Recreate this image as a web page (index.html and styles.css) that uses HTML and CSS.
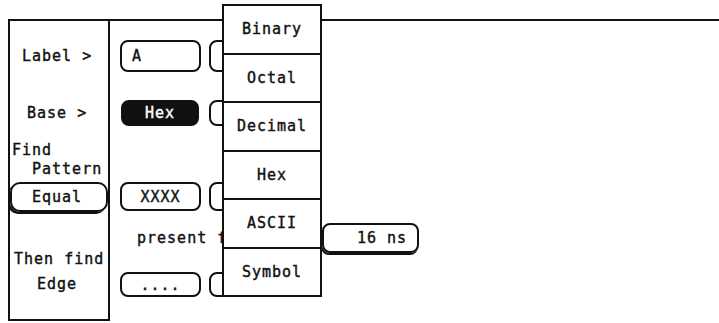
FILE: index.html
```html
<!DOCTYPE html>
<html>
<head>
<meta charset="utf-8">
<link rel="stylesheet" href="styles.css">
</head>
<body>
<div class="screen">
  <aside class="side">
    <div class="lbl lbl-label">Label &gt;</div>
    <div class="lbl lbl-base">Base &gt;</div>
    <div class="lbl lbl-find">Find</div>
    <div class="lbl lbl-pattern">Pattern</div>
    <div class="equal">Equal</div>
    <div class="lbl lbl-then">Then find</div>
    <div class="lbl lbl-edge">Edge</div>
  </aside>
  <main class="fields">
    <div class="row row1">
      <div class="field left">A</div>
      <div class="field"></div>
    </div>
    <div class="row row2">
      <div class="field inv">Hex</div>
      <div class="field"></div>
    </div>
    <div class="row row3">
      <div class="field">XXXX</div>
      <div class="field"></div>
    </div>
    <div class="row row4">
      <span class="present">present for</span>
      <div class="field ns">16 ns</div>
    </div>
    <div class="row row5">
      <div class="field">....</div>
      <div class="field"></div>
    </div>
  </main>
  <div class="menu">
    <div class="item">Binary</div>
    <div class="item">Octal</div>
    <div class="item">Decimal</div>
    <div class="item">Hex</div>
    <div class="item">ASCII</div>
    <div class="item">Symbol</div>
  </div>
</div>
</body>
</html>
```
FILE: styles.css
```css
* { box-sizing: border-box; }
html, body { margin: 0; background: #fff; }
body {
  width: 719px;
  height: 323px;
  overflow: hidden;
  font-family: "DejaVu Sans Mono", "Liberation Mono", monospace;
  font-size: 15px;
  line-height: 16px;
  letter-spacing: 1px;
  -webkit-text-stroke: 0.4px #111;
  color: #111;
}
.screen {
  position: relative;
  margin: 19px 0 0 8px;
  border-top: 2px solid #111;
  display: flex;
  height: 302px;
}
.side {
  width: 102px;
  height: 300px;
  border-left: 2px solid #111;
  border-right: 2px solid #111;
  border-bottom: 2px solid #111;
  display: flex;
  flex-direction: column;
}
.lbl {
  height: 16px;
  display: flex;
  align-items: center;
  white-space: pre;
}
.lbl-label { margin-top: 19px; height: 32px; padding-left: 12px; }
.lbl-base { margin-top: 28px; height: 26px; padding-left: 17px; }
.lbl-find { margin-top: 16px; padding-left: 2px; }
.lbl-pattern { margin-top: 3px; padding-left: 22px; }
.equal {
  margin-top: 5px;
  height: 30px;
  border: 2px solid #111;
  border-radius: 10px;
  box-shadow: -2px 2px 0 #111;
  display: flex;
  align-items: center;
  padding-left: 20px;
}
.lbl-then { margin-top: 39px; padding-left: 4px; }
.lbl-edge { margin-top: 9px; padding-left: 27px; }

.fields {
  display: flex;
  flex-direction: column;
  padding-left: 10px;
}
.row {
  display: flex;
  gap: 8px;
  align-items: center;
}
.row1 { margin-top: 19px; height: 32px; }
.row2 { margin-top: 28px; height: 26px; }
.row3 { margin-top: 56px; height: 29px; }
.row4 { margin-top: 12px; height: 30px; }
.row5 { margin-top: 19px; height: 25px; }
.field {
  width: 81px;
  height: 100%;
  border: 2px solid #111;
  border-radius: 8px;
  display: flex;
  align-items: center;
  justify-content: center;
  white-space: pre;
}
.field.left { justify-content: flex-start; padding-left: 10px; }
.field.inv {
  background: #111;
  color: #fff;
  -webkit-text-stroke: 0.4px #fff;
  width: 78px;
  margin-left: 1px;
  margin-right: 2px;
}
.present {
  width: 194px;
  padding-left: 17px;
  white-space: pre;
}
.field.ns {
  width: 97px;
  justify-content: flex-start;
  padding-left: 33px;
  box-shadow: -1px 2px 0 #111;
}
.menu {
  position: absolute;
  left: 214px;
  top: -17px;
  width: 100px;
  height: 293px;
  background: #fff;
  border: 2px solid #111;
  display: flex;
  flex-direction: column;
}
.item {
  flex: 1;
  display: flex;
  align-items: center;
  justify-content: center;
}
.item + .item { border-top: 2px solid #111; }
```
